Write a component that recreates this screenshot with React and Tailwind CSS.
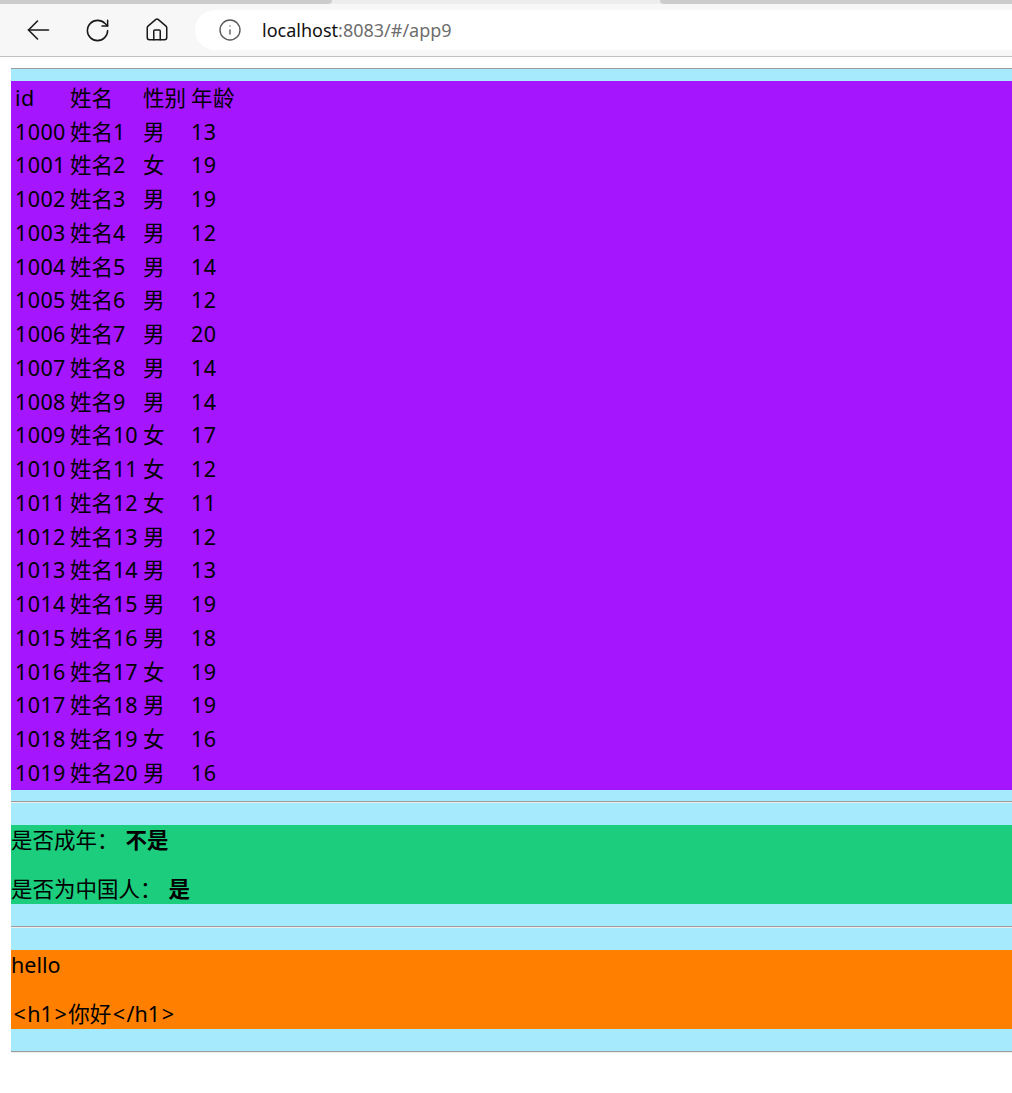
import React from "react";
import { RotateCw, House, Info } from "lucide-react";

const rows = [
  ["1000", "姓名1", "男", "13"],
  ["1001", "姓名2", "女", "19"],
  ["1002", "姓名3", "男", "19"],
  ["1003", "姓名4", "男", "12"],
  ["1004", "姓名5", "男", "14"],
  ["1005", "姓名6", "男", "12"],
  ["1006", "姓名7", "男", "20"],
  ["1007", "姓名8", "男", "14"],
  ["1008", "姓名9", "男", "14"],
  ["1009", "姓名10", "女", "17"],
  ["1010", "姓名11", "女", "12"],
  ["1011", "姓名12", "女", "11"],
  ["1012", "姓名13", "男", "12"],
  ["1013", "姓名14", "男", "13"],
  ["1014", "姓名15", "男", "19"],
  ["1015", "姓名16", "男", "18"],
  ["1016", "姓名17", "女", "19"],
  ["1017", "姓名18", "男", "19"],
  ["1018", "姓名19", "女", "16"],
  ["1019", "姓名20", "男", "16"],
];

function Row({ cells }) {
  return (
    <div className="flex h-[33.75px] items-center whitespace-nowrap">
      <span className="w-[59px] shrink-0 pl-[4px] tracking-[0.4px]">{cells[0]}</span>
      <span className="w-[73px] shrink-0">{cells[1]}</span>
      <span className="w-[48px] shrink-0">{cells[2]}</span>
      <span className="tracking-[0.4px]">{cells[3]}</span>
    </div>
  );
}

function Hr() {
  return <div className="h-[2px] border-t border-[#9b9b9b] bg-[#eeeeee]" />;
}

function B({ children }) {
  return <span className="px-[1.5px]">{children}</span>;
}

export default function App() {
  return (
    <div className="min-h-[1093px] bg-white overflow-hidden">
      {/* browser chrome */}
      <div className="bg-[#f7f7f7] border-b border-[#c2c2c2]">
        <div className="relative h-[4px] bg-[#ededed]">
          <div className="absolute left-0 top-0 h-[4px] w-[332px] bg-[#cccccc] rounded-br-[5px]" />
          <div className="absolute left-[660px] top-0 h-[4px] right-0 bg-[#cccccc] rounded-bl-[5px]" />
        </div>
        <div className="flex h-[52px] items-center">
          <div className="ml-[18px] flex h-[40px] w-[40px] items-center justify-center">
            <svg width="23" height="20" viewBox="0 0 23 20" fill="none" stroke="#1a1a1a" strokeWidth="1.6" strokeLinecap="round" strokeLinejoin="round">
              <path d="M1.5 10H21.5" />
              <path d="M10.5 1L1.5 10L10.5 19" />
            </svg>
          </div>
          <div className="ml-[19px] flex h-[40px] w-[40px] items-center justify-center">
            <RotateCw size={27} strokeWidth={1.35} color="#1a1a1a" />
          </div>
          <div className="ml-[20px] flex h-[40px] w-[40px] items-center justify-center">
            <House size={26} strokeWidth={1.4} color="#1a1a1a" />
          </div>
          <div className="ml-[18px] flex h-[40px] flex-1 items-center rounded-l-full bg-white pl-[23px]">
            <Info size={24} strokeWidth={1.4} color="#5a5a5a" />
            <span className="ml-[20px] text-[18px] leading-none" style={{ fontFamily: '"Noto Sans", sans-serif' }}>
              <span className="text-[#111111]">localhost</span>
              <span className="text-[#6e6e6e]">:8083/#/app9</span>
            </span>
          </div>
        </div>
      </div>

      {/* page */}
      <div
        className="ml-[11px] mt-[11px] text-[21.5px] text-black"
        style={{ fontFamily: '"Noto Sans", "Noto Sans CJK SC", sans-serif' }}
      >
        <div className="h-px bg-[#9b9b9b]" />
        <div className="bg-[#a5eafd] pt-[12px] pb-[11px]">
          <div className="bg-[#a516fe]">
            <Row cells={["id", "姓名", "性别", "年龄"]} />
            {rows.map((r) => (
              <Row key={r[0]} cells={r} />
            ))}
          </div>
        </div>
        <Hr />
        <div className="bg-[#a5eafd] pt-[22px] pb-[22px]">
          <div className="bg-[#1bcd7d] flex flex-col gap-[19px]">
            <div className="h-[30px] leading-[30px] whitespace-nowrap">
              是否成年：<b className="ml-[7px]">不是</b>
            </div>
            <div className="h-[30px] leading-[30px] whitespace-nowrap">
              是否为中国人：<b className="ml-[7px]">是</b>
            </div>
          </div>
        </div>
        <Hr />
        <div className="bg-[#a5eafd] pt-[22px] pb-[22px]">
          <div className="bg-[#ff8000] flex flex-col gap-[19px]">
            <div className="h-[30px] leading-[30px] whitespace-nowrap">hello</div>
            <div className="h-[30px] leading-[30px] whitespace-nowrap pl-[1px]">
              <B>&lt;</B>h1<B>&gt;</B>你好<B>&lt;</B>/h1<B>&gt;</B>
            </div>
          </div>
        </div>
        <Hr />
      </div>
    </div>
  );
}
